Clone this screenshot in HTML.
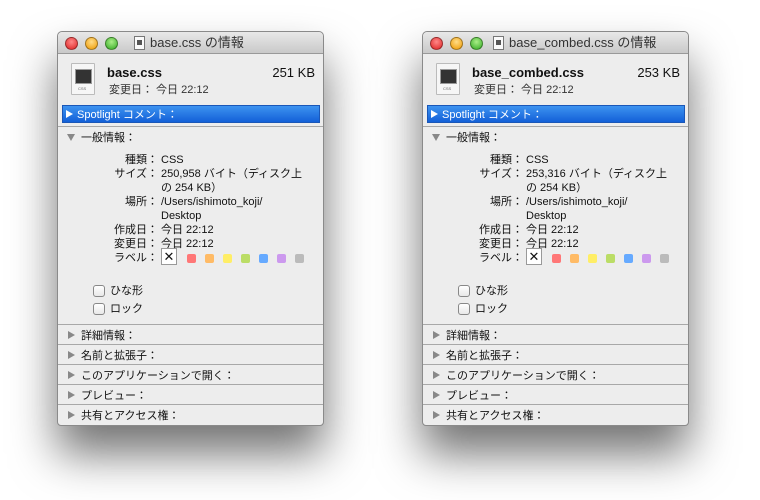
<!DOCTYPE html>
<html><head><meta charset="utf-8"><style>
body{margin:0;width:760px;height:500px;background:#fff;position:relative;overflow:hidden;font-family:"Liberation Sans","Noto Sans CJK JP",sans-serif;font-size:11px;color:#111}
.w{position:absolute;top:31px;width:265px;height:393px;background:#ededed;border:1px solid #8a8a8a;border-radius:5px 5px 4px 4px;box-shadow:0 28px 45px rgba(0,0,0,.55)}
.w *{position:absolute;white-space:nowrap;line-height:14px}
.tb{left:0;top:0;width:265px;height:21px;border-radius:5px 5px 0 0;background:linear-gradient(#e8e8e8,#c9c9c9);border-bottom:1px solid #999}
.tl{width:11px;height:11px;border-radius:50%;top:5px;border:1px solid rgba(0,0,0,.35)}
.ti{top:4px;font-size:13px;color:#333}
.doc{top:4px;width:9px;height:12px;border:1px solid #777;background:#fafafa}
.doc::after{content:"";position:absolute;left:2px;top:3px;width:5px;height:5px;background:#555}
.ic{left:13px;top:31px;width:22px;height:30px;background:#f6f6f6;border:1px solid #bbb;border-radius:1px}
.ic::before{content:"";position:absolute;left:3px;top:5px;width:15px;height:13px;background:#333;border:1px solid #999}
.ic::after{content:"CSS";position:absolute;left:6px;top:22px;font-size:4px;line-height:5px;color:#666}
.nm{left:49px;top:34px;font-weight:bold;font-size:13px}
.sz{right:8px;top:34px;font-size:13px}
.md{left:51px;top:51px;color:#333}
.sp{left:4px;top:73px;width:256px;height:16px;background:linear-gradient(#3d93f0,#1360d8);color:#fff;border:1px solid #1a57b8}
.sp span{left:14px;top:2px}
.sp i{left:3px;top:4px;width:0;height:0;border-left:7px solid #fff;border-top:4px solid transparent;border-bottom:4px solid transparent}
.hr{left:0;width:265px;height:1px;background:#a8a8a8}
.tri{width:0;height:0;border-left:7px solid #888;border-top:4px solid transparent;border-bottom:4px solid transparent}
.trd{width:0;height:0;border-top:7px solid #888;border-left:4px solid transparent;border-right:4px solid transparent}
.lb{right:165px;text-align:right}
.v{left:103px}
.t{margin-top:1px}
.cb{width:10px;height:10px;border:1px solid #888;border-radius:3px;background:linear-gradient(#fff,#e8e8e8)}
.c{width:9px;height:9px;border-radius:2px;top:222px}
.x{left:103px;top:216px;width:14px;height:15px;border:1px solid #999;background:#fff;font-size:13px;text-align:center;line-height:15px!important}
.sec{left:23px;margin-top:1px}
</style></head><body>

<div class="w" style="left:57px">
<div class="tb"></div>
<div class="tl" style="left:7px;background:radial-gradient(circle at 50% 35%,#f88,#d22)"></div>
<div class="tl" style="left:27px;background:radial-gradient(circle at 50% 35%,#fd8,#e90)"></div>
<div class="tl" style="left:47px;background:radial-gradient(circle at 50% 35%,#ae8,#3a2)"></div>
<div class="doc" style="left:76px"></div>
<div class="ti" style="left:92px">base.css の情報</div>
<div class="ic"></div>
<div class="nm">base.css</div><div class="sz">251 KB</div>
<div class="md">変更日： 今日 22:12</div>
<div class="sp"><i></i><span>Spotlight コメント：</span></div>
<div class="hr" style="top:94px"></div>
<div class="trd" style="left:9px;top:102px"></div><div class="sec" style="top:98px">一般情報：</div>
<div class="lb t" style="top:120px">種類：</div><div class="v t" style="top:120px">CSS</div>
<div class="lb t" style="top:134px">サイズ：</div><div class="v t" style="top:134px">250,958 バイト（ディスク上</div>
<div class="v t" style="top:148px">の 254 KB）</div>
<div class="lb t" style="top:162px">場所：</div><div class="v t" style="top:162px">/Users/ishimoto_koji/</div>
<div class="v t" style="top:176px">Desktop</div>
<div class="lb t" style="top:190px">作成日：</div><div class="v t" style="top:190px">今日 22:12</div>
<div class="lb t" style="top:204px">変更日：</div><div class="v t" style="top:204px">今日 22:12</div>
<div class="lb t" style="top:218px">ラベル：</div>
<div class="x">✕</div>
<div class="c" style="left:129px;background:#f77"></div>
<div class="c" style="left:147px;background:#fb6"></div>
<div class="c" style="left:165px;background:#fe6"></div>
<div class="c" style="left:183px;background:#bd6"></div>
<div class="c" style="left:201px;background:#6af"></div>
<div class="c" style="left:219px;background:#c9e"></div>
<div class="c" style="left:237px;background:#bbb"></div>
<div class="cb" style="left:35px;top:253px"></div><div class="t" style="left:52px;top:251px">ひな形</div>
<div class="cb" style="left:35px;top:271px"></div><div class="t" style="left:52px;top:269px">ロック</div>
<div class="hr" style="top:292px"></div>
<div class="tri" style="left:10px;top:299px"></div><div class="sec" style="top:296px">詳細情報：</div>
<div class="hr" style="top:312px"></div>
<div class="tri" style="left:10px;top:319px"></div><div class="sec" style="top:316px">名前と拡張子：</div>
<div class="hr" style="top:332px"></div>
<div class="tri" style="left:10px;top:339px"></div><div class="sec" style="top:336px">このアプリケーションで開く：</div>
<div class="hr" style="top:352px"></div>
<div class="tri" style="left:10px;top:359px"></div><div class="sec" style="top:356px">プレビュー：</div>
<div class="hr" style="top:372px"></div>
<div class="tri" style="left:10px;top:379px"></div><div class="sec" style="top:376px">共有とアクセス権：</div>
</div>

<div class="w" style="left:422px">
<div class="tb"></div>
<div class="tl" style="left:7px;background:radial-gradient(circle at 50% 35%,#f88,#d22)"></div>
<div class="tl" style="left:27px;background:radial-gradient(circle at 50% 35%,#fd8,#e90)"></div>
<div class="tl" style="left:47px;background:radial-gradient(circle at 50% 35%,#ae8,#3a2)"></div>
<div class="doc" style="left:70px"></div>
<div class="ti" style="left:86px">base_combed.css の情報</div>
<div class="ic"></div>
<div class="nm">base_combed.css</div><div class="sz">253 KB</div>
<div class="md">変更日： 今日 22:12</div>
<div class="sp"><i></i><span>Spotlight コメント：</span></div>
<div class="hr" style="top:94px"></div>
<div class="trd" style="left:9px;top:102px"></div><div class="sec" style="top:98px">一般情報：</div>
<div class="lb t" style="top:120px">種類：</div><div class="v t" style="top:120px">CSS</div>
<div class="lb t" style="top:134px">サイズ：</div><div class="v t" style="top:134px">253,316 バイト（ディスク上</div>
<div class="v t" style="top:148px">の 254 KB）</div>
<div class="lb t" style="top:162px">場所：</div><div class="v t" style="top:162px">/Users/ishimoto_koji/</div>
<div class="v t" style="top:176px">Desktop</div>
<div class="lb t" style="top:190px">作成日：</div><div class="v t" style="top:190px">今日 22:12</div>
<div class="lb t" style="top:204px">変更日：</div><div class="v t" style="top:204px">今日 22:12</div>
<div class="lb t" style="top:218px">ラベル：</div>
<div class="x">✕</div>
<div class="c" style="left:129px;background:#f77"></div>
<div class="c" style="left:147px;background:#fb6"></div>
<div class="c" style="left:165px;background:#fe6"></div>
<div class="c" style="left:183px;background:#bd6"></div>
<div class="c" style="left:201px;background:#6af"></div>
<div class="c" style="left:219px;background:#c9e"></div>
<div class="c" style="left:237px;background:#bbb"></div>
<div class="cb" style="left:35px;top:253px"></div><div class="t" style="left:52px;top:251px">ひな形</div>
<div class="cb" style="left:35px;top:271px"></div><div class="t" style="left:52px;top:269px">ロック</div>
<div class="hr" style="top:292px"></div>
<div class="tri" style="left:10px;top:299px"></div><div class="sec" style="top:296px">詳細情報：</div>
<div class="hr" style="top:312px"></div>
<div class="tri" style="left:10px;top:319px"></div><div class="sec" style="top:316px">名前と拡張子：</div>
<div class="hr" style="top:332px"></div>
<div class="tri" style="left:10px;top:339px"></div><div class="sec" style="top:336px">このアプリケーションで開く：</div>
<div class="hr" style="top:352px"></div>
<div class="tri" style="left:10px;top:359px"></div><div class="sec" style="top:356px">プレビュー：</div>
<div class="hr" style="top:372px"></div>
<div class="tri" style="left:10px;top:379px"></div><div class="sec" style="top:376px">共有とアクセス権：</div>
</div>
</body></html>
